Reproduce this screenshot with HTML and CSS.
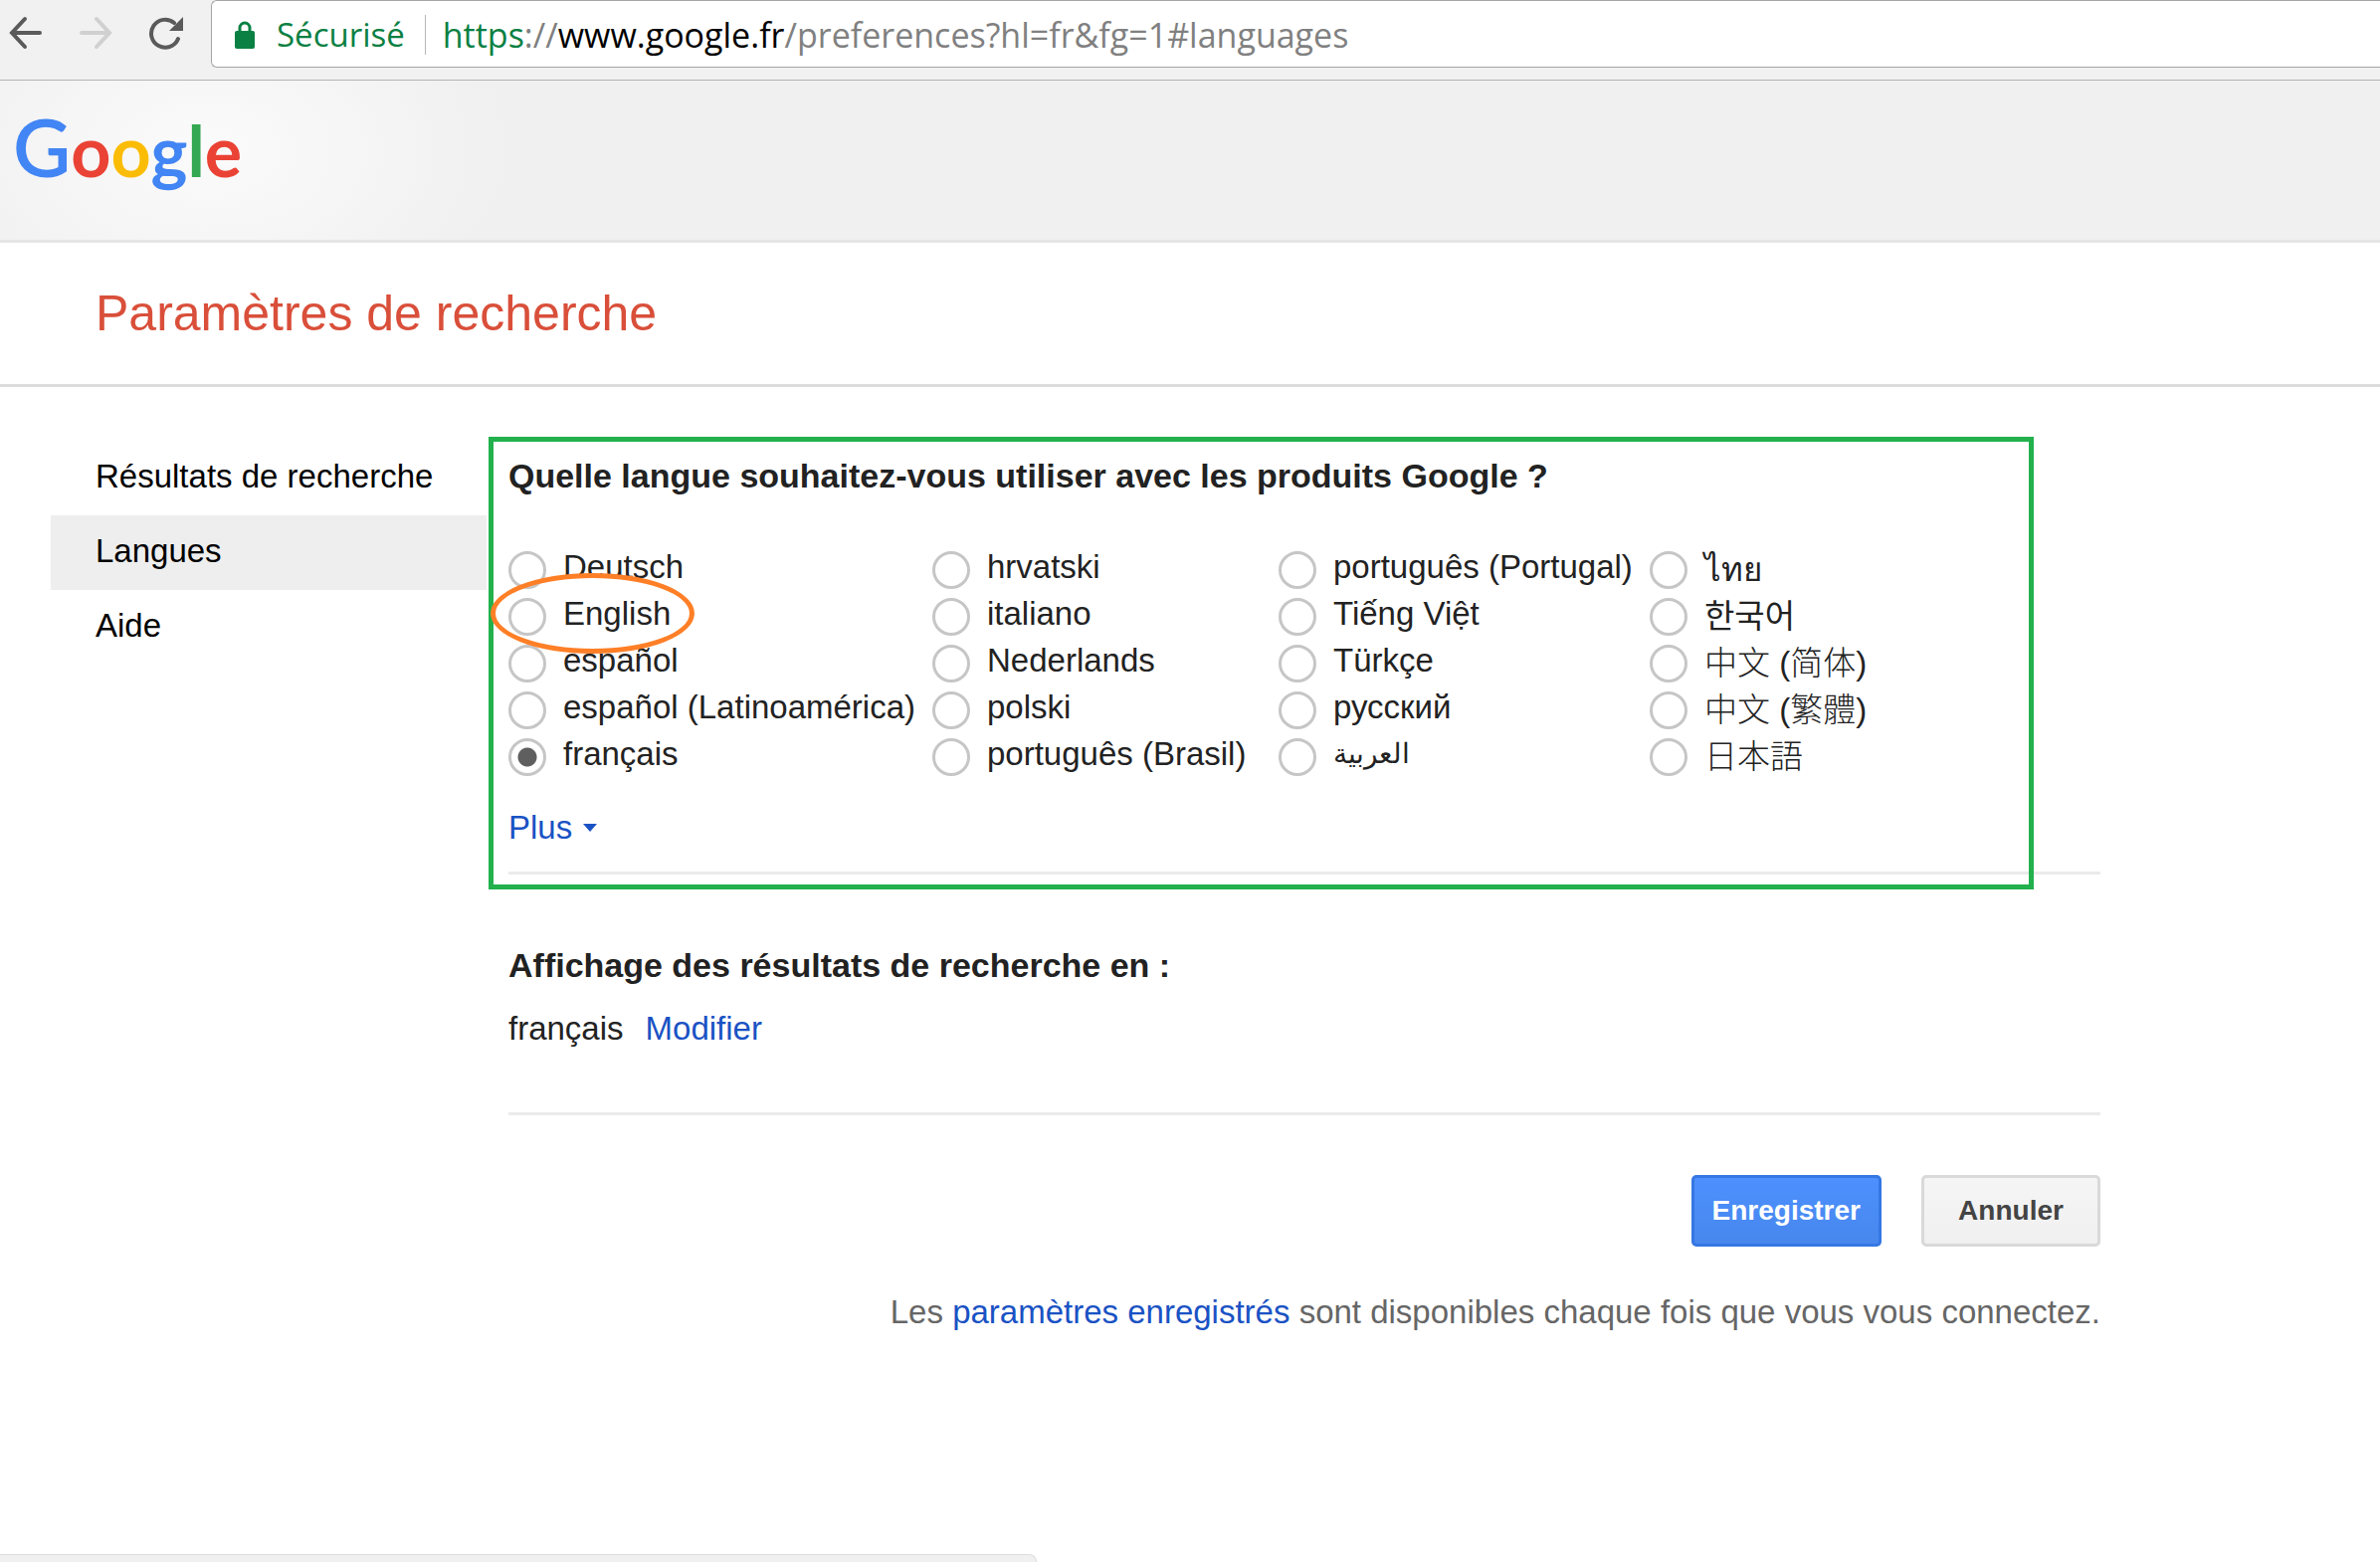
FILE: index.html
```html
<!DOCTYPE html>
<html lang="fr">
<head>
<meta charset="utf-8">
<title>Paramètres de recherche</title>
<link rel="stylesheet" href="styles.css">
</head>
<body>
<div class="toolbar">
  <div class="history">
    <button class="tool" type="button" aria-label="Précédent">
      <svg viewBox="0 0 36 36" fill="none" stroke="#5a5a5a" stroke-width="4" stroke-linecap="round"><path d="M4 18H32M17 4L4 18L17 32"/></svg>
    </button>
    <button class="tool" type="button" aria-label="Suivant">
      <svg viewBox="0 0 36 36" fill="none" stroke="#d0d0d0" stroke-width="4" stroke-linecap="round"><path d="M4 18H32M19 4L32 18L19 32"/></svg>
    </button>
    <button class="tool" type="button" aria-label="Actualiser">
      <svg viewBox="0 0 36 36"><path d="M31 24A14 14 0 1 1 27 8" fill="none" stroke="#5a5a5a" stroke-width="4" stroke-linecap="round"/><path d="M36 2V16H22Z" fill="#5a5a5a"/></svg>
    </button>
  </div>
  <div class="omnibox">
    <svg class="lock" viewBox="0 0 20 28"><path d="M5 12V7A5 5 0 0 1 15 7V12" fill="none" stroke="#0b8043" stroke-width="3"/><rect y="10" width="20" height="18" rx="2" fill="#0b8043"/></svg>
    <span class="secure">Sécurisé</span>
    <div class="url" role="textbox" aria-label="Adresse"><span class="scheme">https</span>://<span class="host">www.google.fr</span>/preferences?hl=fr&amp;fg=1#languages</div>
  </div>
</div>

<header class="banner">
  <a class="logo" href="#accueil" aria-label="Google"><span class="blue initial">G</span><span class="red">o</span><span class="yellow">o</span><span class="blue">g</span><span class="green">l</span><span class="red">e</span></a>
</header>

<div class="title-bar"><h1>Paramètres de recherche</h1></div>

<div class="layout">
  <nav class="side">
    <a href="#results">Résultats de recherche</a>
    <a class="current" href="#languages">Langues</a>
    <a href="#help">Aide</a>
  </nav>

  <main class="content">
    <section class="block">
      <h2 id="question">Quelle langue souhaitez-vous utiliser avec les produits Google ?</h2>
      <div class="languages" role="radiogroup" aria-labelledby="question">
        <div>
          <label class="option"><input type="radio" name="lang"><span>Deutsch</span></label>
          <label class="option marked"><input type="radio" name="lang"><span>English</span></label>
          <label class="option"><input type="radio" name="lang"><span>español</span></label>
          <label class="option"><input type="radio" name="lang"><span>español (Latinoamérica)</span></label>
          <label class="option"><input type="radio" name="lang" checked><span>français</span></label>
        </div>
        <div>
          <label class="option"><input type="radio" name="lang"><span>hrvatski</span></label>
          <label class="option"><input type="radio" name="lang"><span>italiano</span></label>
          <label class="option"><input type="radio" name="lang"><span>Nederlands</span></label>
          <label class="option"><input type="radio" name="lang"><span>polski</span></label>
          <label class="option"><input type="radio" name="lang"><span>português (Brasil)</span></label>
        </div>
        <div>
          <label class="option"><input type="radio" name="lang"><span>português (Portugal)</span></label>
          <label class="option"><input type="radio" name="lang"><span>Tiếng Việt</span></label>
          <label class="option"><input type="radio" name="lang"><span>Türkçe</span></label>
          <label class="option"><input type="radio" name="lang"><span>русский</span></label>
          <label class="option"><input type="radio" name="lang"><span class="arabic" lang="ar">العربية</span></label>
        </div>
        <div class="asian">
          <label class="option"><input type="radio" name="lang"><span lang="th">ไทย</span></label>
          <label class="option"><input type="radio" name="lang"><span class="korean" lang="ko">한국어</span></label>
          <label class="option"><input type="radio" name="lang"><span lang="zh-Hans">中文 (简体)</span></label>
          <label class="option"><input type="radio" name="lang"><span lang="zh-Hant">中文 (繁體)</span></label>
          <label class="option"><input type="radio" name="lang"><span lang="ja">日本語</span></label>
        </div>
      </div>
      <a class="more" href="#more">Plus</a>
      <div class="frame"></div>
    </section>

    <section class="block second">
      <h2>Affichage des résultats de recherche en :</h2>
      <p class="current-language"><span>français</span><a href="#edit">Modifier</a></p>
    </section>

    <div class="actions">
      <button class="button primary" type="submit">Enregistrer</button>
      <button class="button" type="button">Annuler</button>
    </div>
    <p class="note">Les <a href="#saved">paramètres enregistrés</a> sont disponibles chaque fois que vous vous connectez.</p>
  </main>
</div>
<div class="status"></div>
</body>
</html>
```
FILE: styles.css
```css
*, *::before, *::after { box-sizing: border-box; }

body {
  margin: 0;
  min-height: 100vh;
  background: #fff;
  color: #222;
  font: 33px/38px "Liberation Sans", Arial, "Noto Sans CJK SC", sans-serif;
}

a { color: #1a52c4; text-decoration: none; }
h1, h2, p { margin: 0; }

/* Browser toolbar */
.toolbar {
  display: flex;
  align-items: flex-start;
  height: 81px;
  background: #f1f1f1;
  border-bottom: 1px solid #b3b3b3;
}

.history {
  display: flex;
  gap: 34px;
  padding: 15px 28px 0 8px;
}

.tool {
  width: 36px;
  height: 36px;
  padding: 0;
  border: 0;
  background: none;
}

.tool svg { display: block; width: 36px; height: 36px; }

.omnibox {
  flex: 1;
  display: flex;
  align-items: center;
  height: 68px;
  padding: 2px 0 0 23px;
  border: 1px solid #a5a5a5;
  border-right: 0;
  border-radius: 6px 0 0 6px;
  background: #fff;
  font: 33px/40px "Open Sans", "Noto Sans", sans-serif;
}

.lock { width: 20px; height: 28px; }

.secure {
  margin-left: 22px;
  padding-right: 20px;
  border-right: 1px solid #b8b8b8;
  color: #0b8043;
}

.url { margin-left: 17px; color: #808080; font-size: 34px; white-space: nowrap; }
.scheme { color: #0b8043; }
.host { color: #000; }

/* Google banner */
.banner {
  height: 163px;
  padding: 20px 13px 0;
  border-bottom: 3px solid #e5e5e5;
  background: radial-gradient(ellipse 300px 190px at 210px 70px, #fbfbfb, #f0f0f0) #f0f0f0;
}

.logo {
  display: inline-block;
  font: 700 70px/92px Lato, sans-serif;
}

.initial { font-size: 80px; font-weight: 600; }
.blue { color: #4285f4; }
.red { color: #ea4335; }
.yellow { color: #fbbc05; }
.green { color: #34a853; }

.title-bar {
  padding: 43px 96px 42px;
  border-bottom: 3px solid #dcdcdc;
}

h1 {
  color: #d94f3a;
  font-size: 50px;
  font-weight: normal;
  line-height: 57px;
}

/* Page body */
.layout {
  display: grid;
  grid-template-columns: 438px minmax(0, 1600px);
  column-gap: 22px;
  padding: 54px 51px 80px;
}

.side a {
  display: block;
  padding: 0 0 4px 45px;
  color: #000;
  line-height: 71px;
}

.side .current { background: #eee; }

h2 { font-size: 34px; line-height: 71px; }

.block {
  position: relative;
  padding-bottom: 25px;
  border-bottom: 3px solid #ebebeb;
}

.languages {
  display: grid;
  grid-template-columns: 426px 348px 373px 1fr;
  padding: 36px 0 28px;
}

.option {
  display: flex;
  align-items: center;
  gap: 17px;
  height: 47px;
  padding-bottom: 1px;
  white-space: nowrap;
}

.option span { padding-bottom: 7px; }
.asian span { padding-bottom: 1px; font-weight: 300; }
.asian .korean { font-weight: 400; }

.option input {
  appearance: none;
  width: 38px;
  height: 38px;
  margin: 0;
  border: 3px solid #c6c6c6;
  border-radius: 50%;
  background: #fff;
}

.option input:checked {
  background: radial-gradient(circle, #5f5f5f 9px, #fff 10px);
}

.option .arabic { font-size: 28px; }

/* Hand-drawn highlights over the form */
.frame {
  position: absolute;
  inset: -4px 67px -18px -20px;
  border: 5px solid #22b14c;
  pointer-events: none;
}

.marked { position: relative; }

.marked::after {
  content: "";
  position: absolute;
  z-index: 1;
  top: -21px;
  left: -18px;
  width: 205px;
  height: 81px;
  border: 5px solid #ff7f27;
  border-radius: 50%;
  pointer-events: none;
}

.more { display: flex; align-items: center; gap: 11px; }

.more::after {
  content: "";
  border: 7px solid transparent;
  border-top: 8px solid #1a52c4;
  border-bottom: 0;
}

.second { margin-top: 56px; padding-bottom: 65px; }

.current-language {
  display: flex;
  gap: 22px;
  padding-top: 9px;
}

.actions {
  display: flex;
  justify-content: flex-end;
  gap: 40px;
  padding: 60px 0 47px;
}

.button {
  min-width: 180px;
  height: 72px;
  padding: 0 18px;
  border: 3px solid #d9d9d9;
  border-radius: 5px;
  background: linear-gradient(#f5f5f5, #f0f0f0);
  color: #444;
  font: bold 28px/32px "Liberation Sans", Arial, sans-serif;
}

.primary {
  border-color: #3577e3;
  background: linear-gradient(#4d90fe, #4787ed);
  color: #fff;
}

.note { color: #666; text-align: right; }

/* Edge of the browser's status bubble */
.status {
  position: fixed;
  bottom: 0;
  left: 0;
  width: 1042px;
  height: 8px;
  border: 1px solid #dcdcdc;
  border-width: 1px 1px 0 0;
  border-radius: 0 8px 0 0;
  background: #f0f0f0;
}
```
